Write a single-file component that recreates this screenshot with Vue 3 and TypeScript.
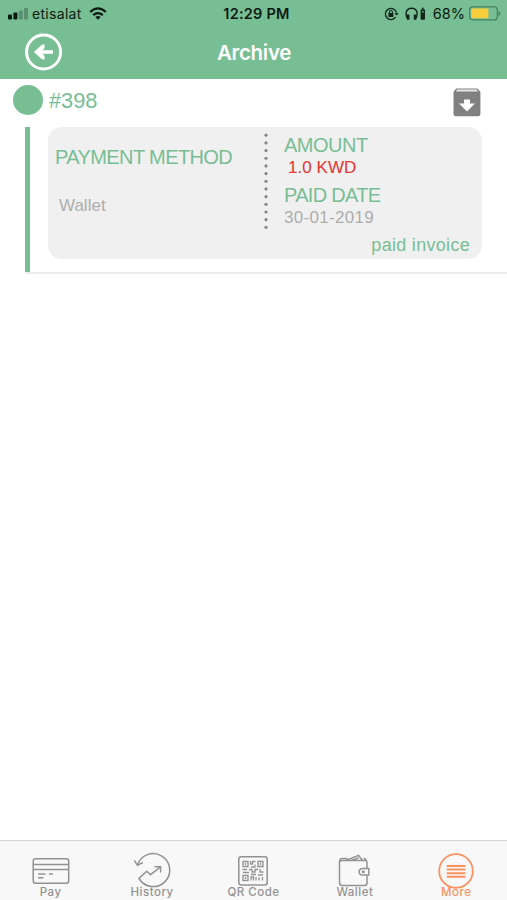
<script setup lang="ts">
interface Tab {
  id: 'pay' | 'history' | 'qr' | 'wallet' | 'more'
  label: string
}

const tabs: Tab[] = [
  { id: 'pay', label: 'Pay' },
  { id: 'history', label: 'History' },
  { id: 'qr', label: 'QR Code' },
  { id: 'wallet', label: 'Wallet' },
  { id: 'more', label: 'More' },
]

const activeTab: Tab['id'] = 'more'

const invoice = {
  number: '#398',
  method: 'Wallet',
  amount: '1.0 KWD',
  paidDate: '30-01-2019',
  status: 'paid invoice',
}
</script>

<template>
  <div class="screen">
    <header class="header">
      <div class="status">
        <div class="status-left">
          <svg class="signal" width="20" height="12" viewBox="0 0 20 12">
            <rect x="0" y="6.5" width="4" height="5" rx="1" />
            <rect x="5.4" y="4.5" width="4" height="7" rx="1" />
            <rect x="10.8" y="2.5" width="4" height="9" rx="1" opacity=".28" />
            <rect x="16" y="0" width="4" height="11.5" rx="1" opacity=".28" />
          </svg>
          <span class="carrier">etisalat</span>
          <svg class="wifi" width="18" height="13" viewBox="0 0 18 13" fill="none" stroke="#0c1a12" stroke-width="2.3">
            <path d="M1.2 5Q9-2.2 16.8 5" />
            <path d="M4.2 8.2Q9 4 13.8 8.2" />
            <path d="M6.3 9.9Q9 7.9 11.7 9.9L9 12.7Z" fill="#0c1a12" stroke="none" />
          </svg>
        </div>
        <span class="time">12:29 PM</span>
        <div class="status-right">
          <svg width="15" height="14" viewBox="0 0 15 14" fill="none" stroke="#12261a" stroke-width="1.3">
            <path d="M11.6 10.2A5.6 5.6 0 1 1 12.4 5.5" />
            <path d="M10.6 6H14.6L12.6 8.6Z" fill="#12261a" stroke="none" />
            <rect x="4.4" y="6.1" width="5" height="3.8" rx=".5" fill="#12261a" stroke="none" />
            <path d="M5.4 6.5V5A1.5 1.5 0 0 1 8.4 5V6.5" stroke-width="1.1" />
          </svg>
          <svg class="headset" width="21" height="14" viewBox="0 0 21 14" fill="none" stroke="#12261a">
            <path d="M2.3 11.5C-.6 5 2.2 1.2 6.6 1.2S13.9 5 10.9 11.5" stroke-width="1.4" />
            <path d="M3.2 7.5V12.8M10 7.5V12.8" stroke-width="2.5" />
            <rect x="15.6" y="2.2" width="4.4" height="10.6" rx=".8" fill="#12261a" stroke="none" />
            <path d="M16.8 1.3H18.8" stroke-width="1.2" />
            <path d="M16.8 4.8H18.8" stroke="#78be94" stroke-width="1.2" />
          </svg>
          <span class="percent">68%</span>
          <svg class="battery" width="32" height="15" viewBox="0 0 32 15">
            <rect x=".7" y=".9" width="27.6" height="13" rx="3" fill="none" stroke="#44815e" stroke-width="1.2" />
            <rect x="2.2" y="2.6" width="17.2" height="9.7" rx="1" fill="#f8ce3d" />
            <path d="M29.5 5V9.8Q31.4 9 31.4 7.4T29.5 5Z" fill="#44815e" />
          </svg>
        </div>
      </div>
      <div class="titlebar">
        <button class="back" aria-label="Back">
          <svg width="38" height="38" viewBox="0 0 38 38" fill="none" stroke="#fff">
            <circle cx="18.6" cy="19" r="17" stroke-width="3" />
            <path d="M28 19H12" stroke-width="3.6" />
            <path d="M19.3 11.8H17.2L9.2 19L17.2 26.2H19.3V22.8L15.2 19L19.3 15.2Z" fill="#fff" stroke-width=".5" />
          </svg>
        </button>
        <h1 class="title">Archive</h1>
      </div>
    </header>

    <main class="content">
      <div class="entry-head">
        <span class="dot"></span>
        <span class="number">{{ invoice.number }}</span>
        <svg class="archive" width="28" height="29" viewBox="0 0 28 29">
          <path d="M3.2.5H24.4L27.4 3.8V26Q27.4 28.3 25 28.3H3Q.5 28.3 .5 26V3.8Z" fill="#808080" />
          <path d="M4.2 1.6H23.6L25 3.6H2.8Z" fill="#e8e8e8" />
          <path d="M11 11.4H17V15.4H22L14 23.4L6 15.4H11Z" fill="#fff" />
        </svg>
      </div>
      <div class="entry-body">
        <section class="card">
          <div class="method">
            <div class="heading method-heading">PAYMENT METHOD</div>
            <div class="value">{{ invoice.method }}</div>
          </div>
          <svg class="divider" width="4" height="98" viewBox="0 0 4 98">
            <circle v-for="n in 13" :key="n" cx="2" :cy="2.2 + (n - 1) * 7.68" r="1.6" fill="#858585" />
          </svg>
          <div class="details">
            <div class="heading amount-heading">AMOUNT</div>
            <div class="amount">{{ invoice.amount }}</div>
            <div class="heading date-heading">PAID DATE</div>
            <div class="date">{{ invoice.paidDate }}</div>
            <div class="paid">{{ invoice.status }}</div>
          </div>
        </section>
      </div>
    </main>

    <nav class="tabs">
      <a v-for="tab in tabs" :key="tab.id" class="tab" :class="{ active: tab.id === activeTab }">
        <svg v-if="tab.id === 'pay'" class="icon" width="38" height="38" viewBox="0 0 38 38">
          <rect x="1.2" y="6.7" width="35.5" height="24.5" rx="2.5" />
          <path d="M1 12.4H36.5M1 17.4H36.5M6 22H13.5M17 22H21M6 25.8H11.5" />
        </svg>
        <svg v-else-if="tab.id === 'history'" class="icon" width="38" height="38" viewBox="0 0 38 38">
          <path d="M4.5 13A16.5 16.5 0 1 1 6 26.5L13.8 19.2L17.5 22.7L27.5 15" />
          <path d="M1.4 8.4L4.4 13.3L9.8 10.5M21.5 14.8H27.6V20.6" />
        </svg>
        <svg v-else-if="tab.id === 'qr'" class="icon" width="38" height="38" viewBox="0 0 38 38">
          <rect x="4.8" y="4.8" width="28.4" height="28.2" rx="2.5" />
          <g stroke-width="1.3">
            <path d="M9 9.5H14V14.5H9ZM24 9.5H29V14.5H24ZM9 23.5H14V28.5H9Z" />
            <path d="M11.5 11V13M26.5 11V13M11.5 25V27M16.5 9V12H18.5V9.5H21.5M17 15H21V12.5M8.5 17.5H13M15 17.5H18V20H21V17.5H24M26 17V20H29.5M9 20.5H15M17 22.5H22M17 28.5V25H19.5V28.5M22 25V28.5M24 23H29M25 25.5V28.5M28.5 25V28.5" />
          </g>
        </svg>
        <svg v-else-if="tab.id === 'wallet'" class="icon wallet" width="38" height="38" viewBox="0 0 38 38">
          <path d="M29 16V10.5Q29 8.5 26.5 8.5H4Q1.5 8.5 1.5 10.5V30.5Q1.5 33.5 4.5 33.5H26.5Q29 33.5 29 31V23.5" />
          <path d="M1.8 10Q1.5 6.5 4 6.5H9.5M8 8.5L20.5 3.3L24.3 8.3M14 8.3L20.5 6M25.5 6.5Q28 6.5 28 8.5" />
          <path d="M30.8 16.5H24.5A3.3 3.3 0 0 0 24.5 23.1H30.8Z" />
          <circle cx="25.3" cy="19.8" r=".8" />
        </svg>
        <svg v-else class="icon" width="38" height="38" viewBox="0 0 38 38">
          <circle cx="19" cy="19" r="16.8" stroke-width="1.8" />
          <path d="M9.8 14H28.5M9.8 17.6H28.5M9.8 21.2H28.5M9.8 24.8H28.5" stroke-width="2" />
        </svg>
        <span class="label">{{ tab.label }}</span>
      </a>
    </nav>
  </div>
</template>

<style>
body {
  margin: 0;
  background: #fff;
}
</style>

<style scoped>
.screen {
  width: 507px;
  height: 900px;
  display: flex;
  flex-direction: column;
  overflow: hidden;
  font-family: 'Liberation Sans', Arial, sans-serif;
  color: #78be94;
  white-space: nowrap;
}
.header {
  height: 79px;
  flex: none;
  background: #78be94;
  font-family: Inter, sans-serif;
}
.status {
  height: 27px;
  display: grid;
  grid-template-columns: 1fr auto 1fr;
  align-items: center;
  padding: 0 6px 0 8px;
  color: #0c1a12;
}
.status-left,
.status-right {
  display: flex;
  align-items: center;
}
.signal {
  fill: #0c1a12;
}
.carrier {
  margin-left: 4px;
  font-size: 14px;
  line-height: 27px;
  letter-spacing: 0.3px;
}
.wifi {
  margin-left: 7px;
}
.time {
  margin-left: 4px;
  font-size: 14.5px;
  font-weight: 600;
  letter-spacing: 0.25px;
}
.status-right {
  justify-content: flex-end;
}
.headset {
  margin-left: 6px;
}
.percent {
  margin-left: 7px;
  font-size: 14.5px;
}
.battery {
  margin-left: 4px;
}
.titlebar {
  height: 52px;
  display: grid;
  grid-template-columns: 90px 1fr 90px;
}
.back {
  width: 38px;
  height: 38px;
  margin: 6px 0 0 25px;
  padding: 0;
  border: 0;
  background: none;
}
.title {
  margin: 0;
  padding-left: 1px;
  text-align: center;
  color: #fff;
  font-size: 20.5px;
  font-weight: 600;
  line-height: 51px;
  letter-spacing: -0.3px;
}
.content {
  flex: 1;
}
.entry-head {
  height: 48px;
  display: flex;
  align-items: flex-start;
  padding: 0 26px 0 13px;
}
.dot {
  width: 30px;
  height: 30px;
  margin-top: 6px;
  border-radius: 50%;
  background: #78be94;
}
.number {
  flex: 1;
  margin: 9px 0 0 6px;
  font-size: 21.8px;
  line-height: 26px;
}
.archive {
  margin-top: 9px;
}
.entry-body {
  height: 145px;
  margin-left: 25px;
  display: flex;
  align-items: flex-start;
  border-bottom: 2px solid #ececec;
}
.entry-body::before {
  content: '';
  width: 5px;
  height: 145px;
  background: #78be94;
}
.card {
  width: 434px;
  height: 132px;
  margin-left: 18px;
  border-radius: 14px;
  background: #f0f0f0;
  display: flex;
  align-items: flex-start;
}
.method {
  width: 216px;
  padding-top: 18px;
  flex: none;
}
.heading {
  font-size: 20px;
  line-height: 24px;
}
.method-heading {
  margin-left: 7px;
  letter-spacing: -0.6px;
}
.value {
  margin: 26px 0 0 11px;
  font-size: 17px;
  line-height: 22px;
  color: #adadad;
}
.divider {
  margin-top: 6px;
  flex: none;
}
.details {
  flex: 1;
  padding: 6px 12px 0 16px;
}
.amount-heading {
  letter-spacing: -0.5px;
}
.amount {
  margin-left: 4px;
  font-size: 17px;
  line-height: 21px;
  letter-spacing: 0.05px;
  color: #e5352d;
}
.date-heading {
  margin-top: 5px;
  letter-spacing: -0.7px;
}
.date {
  font-size: 17px;
  line-height: 22px;
  letter-spacing: 0.3px;
  color: #adadad;
}
.paid {
  margin-top: 4px;
  font-size: 18px;
  line-height: 24px;
  letter-spacing: 0.3px;
  text-align: right;
}
.tabs {
  height: 59px;
  flex: none;
  display: grid;
  grid-template-columns: repeat(5, 1fr);
  border-top: 1px solid #d4d4d4;
  background: #f8f8f8;
  color: #929292;
}
.tab {
  display: flex;
  flex-direction: column;
  align-items: center;
}
.icon {
  margin-top: 11px;
  fill: none;
  stroke: currentColor;
  stroke-width: 1.5;
}
.wallet {
  margin-left: 4px;
}
.label {
  margin-top: -6px;
  font-family: Inter, sans-serif;
  font-size: 11.5px;
  font-weight: 500;
  line-height: 16px;
  letter-spacing: 0.5px;
}
.active {
  color: #f79361;
}
</style>
